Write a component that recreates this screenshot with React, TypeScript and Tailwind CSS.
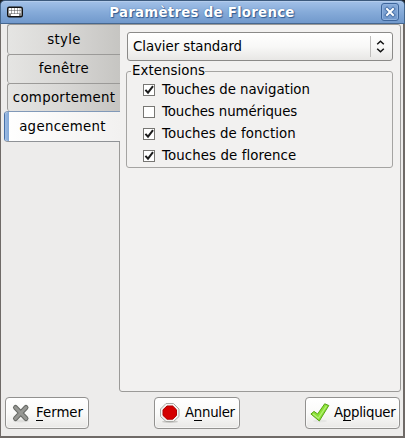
import { useState, type ReactNode } from 'react';

const tabs = [
  { label: 'style', height: 'h-[30px]' },
  { label: 'fenêtre', height: 'h-[29px]' },
  { label: 'comportement', height: 'h-[28px]' },
];

const extensions = [
  { label: 'Touches de navigation', initial: true, tracking: 'tracking-[-0.05px]' },
  { label: 'Touches numériques', initial: false, tracking: 'tracking-[-0.1px]' },
  { label: 'Touches de fonction', initial: true, tracking: 'tracking-[0.05px]' },
  { label: 'Touches de florence', initial: true, tracking: 'tracking-[0.1px]' },
];

function Tab({ label, height }: { label: string; height: string }) {
  return (
    <div
      className={`${height} ml-[3px] flex items-center justify-center rounded-l-[3px] border-t border-l border-[#9b9a98] bg-linear-to-r from-[#e5e5e3] via-[#d8d7d5] to-[#c6c5c2] tracking-[0.3px]`}
    >
      {label}
    </div>
  );
}

function CheckRow({ label, initial, tracking }: { label: string; initial: boolean; tracking: string }) {
  const [checked, setChecked] = useState(initial);
  return (
    <div className="flex h-[22px] items-center gap-[7px]" onClick={() => setChecked(!checked)}>
      <span className="flex size-3 shrink-0 border border-[#777673] bg-white">
        {checked && (
          <svg width="10" height="10" viewBox="0 0 10 10" fill="none" stroke="#1c1c1c" strokeWidth="2">
            <path d="M1.4 4.8 4 7.7 9 1.2" />
          </svg>
        )}
      </span>
      <span className={tracking}>{label}</span>
    </div>
  );
}

function Button({ width, text, icon, children }: { width: string; text: string; icon: ReactNode; children: ReactNode }) {
  return (
    <button
      className={`${width} flex h-8 shrink-0 items-center rounded-[4px] border border-[#92918f] bg-linear-to-b from-white via-[#fafaf9] to-[#e9e8e6] pl-[4px] whitespace-nowrap shadow-[inset_0_0_0_1px_#fff8]`}
    >
      {icon}
      <span className={text}>{children}</span>
    </button>
  );
}

function Key({ children }: { children: string }) {
  return <span className="border-b border-black">{children}</span>;
}

function CloseIcon() {
  return (
    <svg className="shrink-0" width="21" height="20" viewBox="0 0 21 20" fill="none" strokeLinecap="round">
      <ellipse cx="11" cy="18" rx="8" ry="1.5" fill="#dededc" />
      <path d="M5.5 4.5 16 15.5M16 4.5 5.5 15.5" stroke="#666864" strokeWidth="5" />
      <path d="M5.5 4.5 16 15.5M16 4.5 5.5 15.5" stroke="#969793" strokeWidth="3" />
    </svg>
  );
}

function StopIcon() {
  return (
    <svg className="shrink-0" width="21" height="20" viewBox="0 0 21 20">
      <ellipse cx="11" cy="18.7" rx="8" ry="1.3" fill="#c9c8c5" />
      <path d="M7 .5h7.5L20 6v7.5L14.5 18.5H7L1.5 13.5V6Z" fill="#f4f4f2" stroke="#a9aaa6" />
      <path d="M8 3h5.7L17.5 6.8v5.6L13.7 16.2H8L4 12.4V6.8Z" fill="#d40000" stroke="#b00000" />
    </svg>
  );
}

function ApplyIcon() {
  return (
    <svg className="shrink-0" width="21" height="20" viewBox="0 0 21 20">
      <ellipse cx="10" cy="18" rx="7" ry="1.5" fill="#e5e5e3" />
      <path
        d="M.9 11 4 8.4 7.6 11 14.7.8 18.8 2.5 9.3 18Z"
        fill="#8ae234"
        stroke="#5aa31a"
        strokeLinejoin="round"
      />
      <path d="M3 11 8.4 15.2 16.5 2.8" fill="none" stroke="#b5ef78" strokeWidth="1.2" />
    </svg>
  );
}

export default function App() {
  return (
    <div className="flex h-[438px] w-[405px] flex-col bg-[#1e2126] font-['DejaVu_Sans',sans-serif] text-[13.333px] leading-4 text-black">
      <header className="flex h-6 shrink-0 items-center rounded-t-[5px] border-x border-t border-b border-x-[#45688f] border-t-[#3c597c] border-b-[#46678f] bg-linear-to-b from-[#a3c1e8] via-[#86abd9] to-[#7199cc] pr-[5px] pl-[6px] shadow-[inset_0_1px_0_#b3ccec]">
        <svg width="16" height="12" viewBox="0 0 16 12">
          <rect x=".75" y="1.25" width="14.5" height="9.5" rx="1.5" fill="#fff" stroke="#111" strokeWidth="1.5" />
          <path d="M2 4.5h12M2 7.5h12M4.5 2v6M7.5 2v6M10.5 2v6M13 2v6" stroke="#555" strokeWidth=".5" />
          <path d="M2 9h2M12 9h2" stroke="#111" />
        </svg>
        <h1 className="flex-1 pt-0.5 text-center font-bold tracking-[0.26px] text-white [text-shadow:0_0_1px_#315b91,1px_1px_1px_#315b91]">
          Paramètres de Florence
        </h1>
        <button className="flex size-[18px] items-center justify-center rounded-[3px] border border-[#3d659b] bg-linear-to-b from-[#86aad9] to-[#7198cc] shadow-[inset_0_0_0_1px_#8fb1dd]">
          <svg width="12" height="12" viewBox="0 0 12 12" fill="none" strokeLinecap="square">
            <path d="m3 3 6 6M9 3 3 9" stroke="#4a73aa" strokeWidth="4" />
            <path d="m3 3 6 6M9 3 3 9" stroke="#fff" strokeWidth="2" />
          </svg>
        </button>
      </header>

      <main className="flex min-h-0 flex-1 flex-col border-r-2 border-b-2 border-l border-r-[#6f6a67] border-b-[#6f6a67] border-l-[#6f6a67] bg-[#edeceb] pr-[2px] pl-[3px]">
        <div className="flex h-[368px] shrink-0">
          <nav className="z-10 flex w-[116px] shrink-0 flex-col">
            {tabs.map((tab) => (
              <Tab key={tab.label} {...tab} />
            ))}
            <div className="flex h-[31px] overflow-hidden rounded-l-[4px] border-y border-l border-t-[#8199b8] border-b-[#8f9296] border-l-[#4670a8] bg-linear-to-r from-white to-[#f2f1f0]">
              <span className="w-1 bg-linear-to-r from-[#9dbce4] to-[#83a8d7]" />
              <span className="flex flex-1 items-center justify-center pr-1 tracking-[0.3px]">agencement</span>
            </div>
          </nav>
          <section className="-ml-px flex flex-1 flex-col rounded-r-[3px] rounded-bl-[3px] border border-[#9b9a98] bg-[#f2f1f0] px-[7px] pt-[7px]">
            <button className="flex h-[29px] shrink-0 items-center rounded-[3px] border border-[#8b8a88] bg-linear-to-b from-white via-[#f8f8f7] to-[#e8e7e5] pl-[5px]">
              <span className="flex-1 text-left tracking-[-0.05px]">Clavier standard</span>
              <span className="h-[21px] w-px bg-[#bebdbb]" />
              <svg className="mr-[7px] ml-[5px]" width="9" height="13" viewBox="0 0 9 13" fill="none" stroke="#111" strokeWidth="1.5">
                <path d="m1.2 4.2 3.3-3 3.3 3M1.2 8.8l3.3 3 3.3-3" />
              </svg>
            </button>
            <fieldset className="mt-[2px] -ml-px h-[105px] rounded-[3px] border border-[#a5a4a2] pl-4">
              <legend className="-ml-[12px] h-4 pl-px tracking-[0.05px]">Extensions</legend>
              {extensions.map((extension) => (
                <CheckRow key={extension.label} {...extension} />
              ))}
            </fieldset>
          </section>
        </div>
        <footer className="mt-[5px] flex justify-between pr-px pl-px">
          <Button width="w-[84px]" text="ml-[5px]" icon={<CloseIcon />}>
            <Key>F</Key>ermer
          </Button>
          <Button width="w-[86px]" text="ml-[5px] tracking-[-0.3px]" icon={<StopIcon />}>
            A<Key>n</Key>nuler
          </Button>
          <Button width="w-[95px]" text="ml-[3px] tracking-[-0.3px]" icon={<ApplyIcon />}>
            A<Key>p</Key>pliquer
          </Button>
        </footer>
      </main>
    </div>
  );
}
